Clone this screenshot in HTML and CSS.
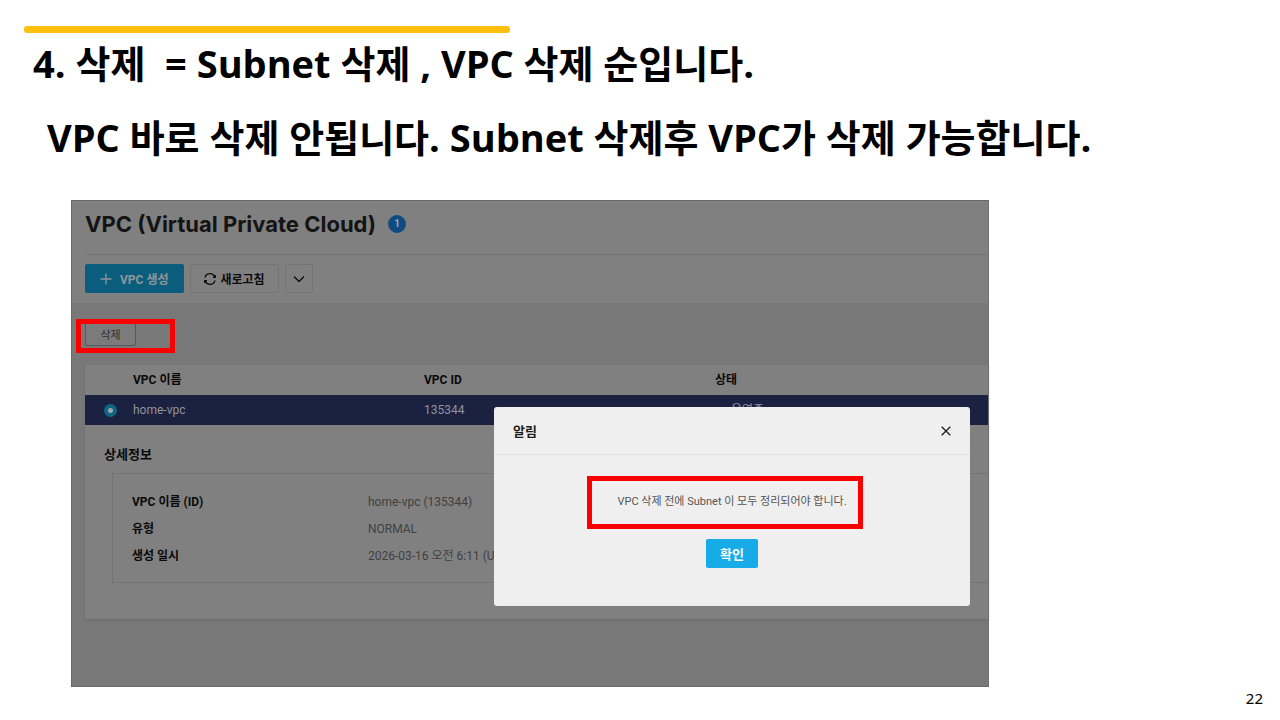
FILE: index.html
```html
<!DOCTYPE html>
<html lang="ko">
  <head>
    <meta charset="UTF-8" />
    <meta name="viewport" content="width=device-width, initial-scale=1.0" />
    <title>VPC 삭제</title>
    <link rel="stylesheet" href="styles.css">
  </head>
  <body>
    <main class="slide">
      <div class="accent-bar"></div>
      <h1 class="slide-title">4. 삭제&nbsp; = Subnet 삭제 , VPC 삭제 순입니다.</h1>
      <p class="slide-subtitle">VPC 바로 삭제 안됩니다. Subnet 삭제후 VPC가 삭제 가능합니다.</p>

      <section class="console">
        <header class="console-header">
          <div class="console-title">
            <h2>VPC (Virtual Private Cloud)</h2>
            <span class="count">1</span>
          </div>
          <div class="toolbar">
            <button type="button" class="btn btn-create">
              <svg width="12" height="12" viewBox="0 0 12 12"><path d="M6 0.5v11M0.5 6h11" /></svg>
              VPC 생성
            </button>
            <button type="button" class="btn">
              <svg width="12" height="12" viewBox="0 0 12 12"><path d="M1 4.6a5 5 0 0 1 9.6-.6M11 7.4a5 5 0 0 1-9.6.6M11.3 2v2.4H9M0.7 10V7.6H3" /></svg>
              새로고침
            </button>
            <button type="button" class="btn btn-more" aria-label="더보기">
              <svg width="12" height="12" viewBox="0 0 12 12"><path d="M1 3.5l5 5 5-5" /></svg>
            </button>
          </div>
        </header>

        <div class="actions">
          <button type="button" class="btn-delete">삭제</button>
          <div class="mark mark-delete"></div>
        </div>

        <div class="card">
          <table class="vpc-table">
            <thead>
              <tr>
                <th class="col-select"></th>
                <th class="col-name">VPC 이름</th>
                <th class="col-id">VPC ID</th>
                <th>상태</th>
              </tr>
            </thead>
            <tbody>
              <tr>
                <td class="col-select"><input type="radio" name="vpc" aria-label="home-vpc" checked /></td>
                <td>home-vpc</td>
                <td>135344</td>
                <td class="status">운영중</td>
              </tr>
            </tbody>
          </table>

          <div class="detail">
            <h3>상세정보</h3>
            <dl class="detail-list">
              <dt>VPC 이름 (ID)</dt>
              <dd>home-vpc (135344)</dd>
              <dt>유형</dt>
              <dd>NORMAL</dd>
              <dt>생성 일시</dt>
              <dd>2026-03-16 오전 6:11 (UTC+09:00)</dd>
            </dl>
          </div>
        </div>

        <div class="modal-layer">
          <div class="modal" role="dialog" aria-labelledby="modalTitle">
            <div class="modal-header">
              <h3 id="modalTitle">알림</h3>
              <button type="button" class="btn-close" aria-label="닫기">
                <svg width="10" height="10" viewBox="0 0 10 10"><path d="M0.7 0.7l8.6 8.6M9.3 0.7L0.7 9.3" /></svg>
              </button>
            </div>
            <div class="modal-body">
              <p class="message">
                VPC 삭제 전에 Subnet 이 모두 정리되어야 합니다.
                <span class="mark mark-message"></span>
              </p>
              <button type="button" class="btn-ok">확인</button>
            </div>
          </div>
        </div>
      </section>

      <footer class="page-number">22</footer>
    </main>
  </body>
</html>
```

FILE: styles.css
```css
* {
  box-sizing: border-box;
}
body {
  margin: 0;
  background-color: #fff;
  color: #000;
  font-family: Roboto, "Noto Sans CJK KR", sans-serif;
  font-size: 12px;
}
h1,
h2,
h3,
p,
dl,
dd {
  margin: 0;
}
button {
  font-family: inherit;
  cursor: pointer;
}
svg {
  fill: none;
  stroke: currentColor;
  stroke-width: 1.3;
}

/* slide */
.slide {
  display: flex;
  flex-direction: column;
  min-height: 100vh;
  padding-top: 26px;
}
.accent-bar {
  width: 38%;
  height: 7px;
  margin-left: 24px;
  border-radius: 3px;
  background-color: #fdc00f;
}
.slide-title,
.slide-subtitle {
  font-family: "Open Sans", "Noto Sans CJK KR", sans-serif;
  font-size: 38px;
  font-weight: 700;
  line-height: 60px;
}
.slide-title {
  margin: 0 0 0 33px;
}
.slide-subtitle {
  margin: 14px 0 0 47px;
}
.page-number {
  padding: 0 17px;
  font-family: "Noto Sans", sans-serif;
  font-size: 15px;
  line-height: 22px;
  height: 33px;
  text-align: right;
}

/* console */
.console {
  position: relative;
  flex: 1;
  margin: 33px 291px 0 71px;
  border: 1px solid #686868;
  border-right-color: #707070;
  background-color: #787878;
}
.console-header {
  padding-left: 13px;
  background-color: #808080;
}
.console-title {
  display: flex;
  align-items: center;
  gap: 12px;
  height: 54px;
  padding-bottom: 7px;
  border-bottom: 1px solid #747474;
}
.console-title h2 {
  color: #141414;
  font-family: Inter, sans-serif;
  font-size: 22px;
  font-weight: 700;
}
.count {
  width: 18px;
  border-radius: 50%;
  background-color: #0f4a80;
  color: #a0a8b0;
  font-size: 10px;
  font-weight: 700;
  line-height: 18px;
  text-align: center;
}
.toolbar {
  display: flex;
  gap: 6px;
  padding: 9px 0 10px;
}
.btn {
  display: flex;
  align-items: center;
  gap: 5px;
  height: 29px;
  padding: 0 13px;
  border: 1px solid #747474;
  border-radius: 2px;
  background-color: #808080;
  color: #0c0c0c;
  font-size: 12px;
  font-weight: 700;
}
.btn-create {
  gap: 8px;
  padding: 0 14px;
  border-color: #0b5d7d;
  background-color: #0b5d7d;
  color: #909698;
}
.btn-more {
  padding: 0 7px;
}
.actions {
  position: relative;
  padding: 18px 13px 19px;
}
.btn-delete {
  display: block;
  width: 51px;
  height: 25px;
  padding: 0;
  border: 1px solid #505a60;
  border-radius: 2px;
  background-color: #7b7b7b;
  color: #303030;
  font-size: 11px;
}

/* red highlight boxes */
.mark {
  position: absolute;
  border: 5px solid #f80000;
}
.mark-delete {
  top: 16px;
  left: 4px;
  width: 99px;
  height: 34px;
}
.mark-message {
  top: -17px;
  right: -16px;
  bottom: -18px;
  left: -30px;
}

.card {
  margin-left: 13px;
  background-color: #808080;
  box-shadow: 0 1px 2px #6c6c6c;
}
.vpc-table {
  width: 100%;
  border-collapse: collapse;
  table-layout: fixed;
  line-height: 18px;
}
.vpc-table th,
.vpc-table td {
  height: 30px;
  padding: 0;
  text-align: left;
}
.vpc-table th {
  color: #0a0a0a;
  font-weight: 700;
}
.vpc-table td {
  background-color: #1b2140;
  color: #90939f;
}
.vpc-table .col-select {
  width: 48px;
  padding-left: 19px;
}
.vpc-table .col-name,
.vpc-table .col-id {
  width: 291px;
}
.vpc-table .status {
  padding-left: 16px;
}
.col-select input {
  display: block;
  width: 13px;
  height: 13px;
  margin: 0;
  border: 4px solid #0f6683;
  border-radius: 50%;
  appearance: none;
  background-color: #a0a8ac;
}
.detail {
  padding: 20px 0 36px 19px;
}
.detail h3 {
  color: #0a0a0a;
  font-size: 13px;
  line-height: 20px;
}
.detail-list {
  display: grid;
  grid-template-columns: 236px 1fr;
  margin: 8px 0 0 8px;
  padding: 15px 19px 12px;
  border: 1px solid #747474;
  border-right: none;
  line-height: 27px;
}
.detail-list dt {
  color: #0a0a0a;
  font-weight: 700;
}
.detail-list dd {
  color: #404040;
}

/* modal */
.modal-layer {
  position: absolute;
  inset: 0;
  display: flex;
  align-items: flex-start;
  justify-content: flex-end;
  padding: 206px 18px 0 0;
}
.modal {
  width: 53%;
  border-radius: 3px;
  background-color: #efefef;
}
.modal-header {
  display: flex;
  align-items: center;
  justify-content: space-between;
  height: 48px;
  padding: 0 19px;
  border-bottom: 1px solid #e0e0e0;
}
.modal-header h3 {
  color: #1c1c1c;
  font-size: 13px;
}
.btn-close {
  display: flex;
  padding: 0;
  border: none;
  background: none;
  color: #1c1c1c;
}
.modal-body {
  display: flex;
  flex-direction: column;
  align-items: center;
  gap: 28px;
  padding: 38px 0;
}
.message {
  position: relative;
  color: #555;
  font-size: 11px;
  line-height: 18px;
}
.btn-ok {
  width: 52px;
  height: 29px;
  padding: 0;
  border: none;
  border-radius: 2px;
  background-color: #17ace8;
  color: #fff;
  font-size: 13px;
  font-weight: 700;
}
```
